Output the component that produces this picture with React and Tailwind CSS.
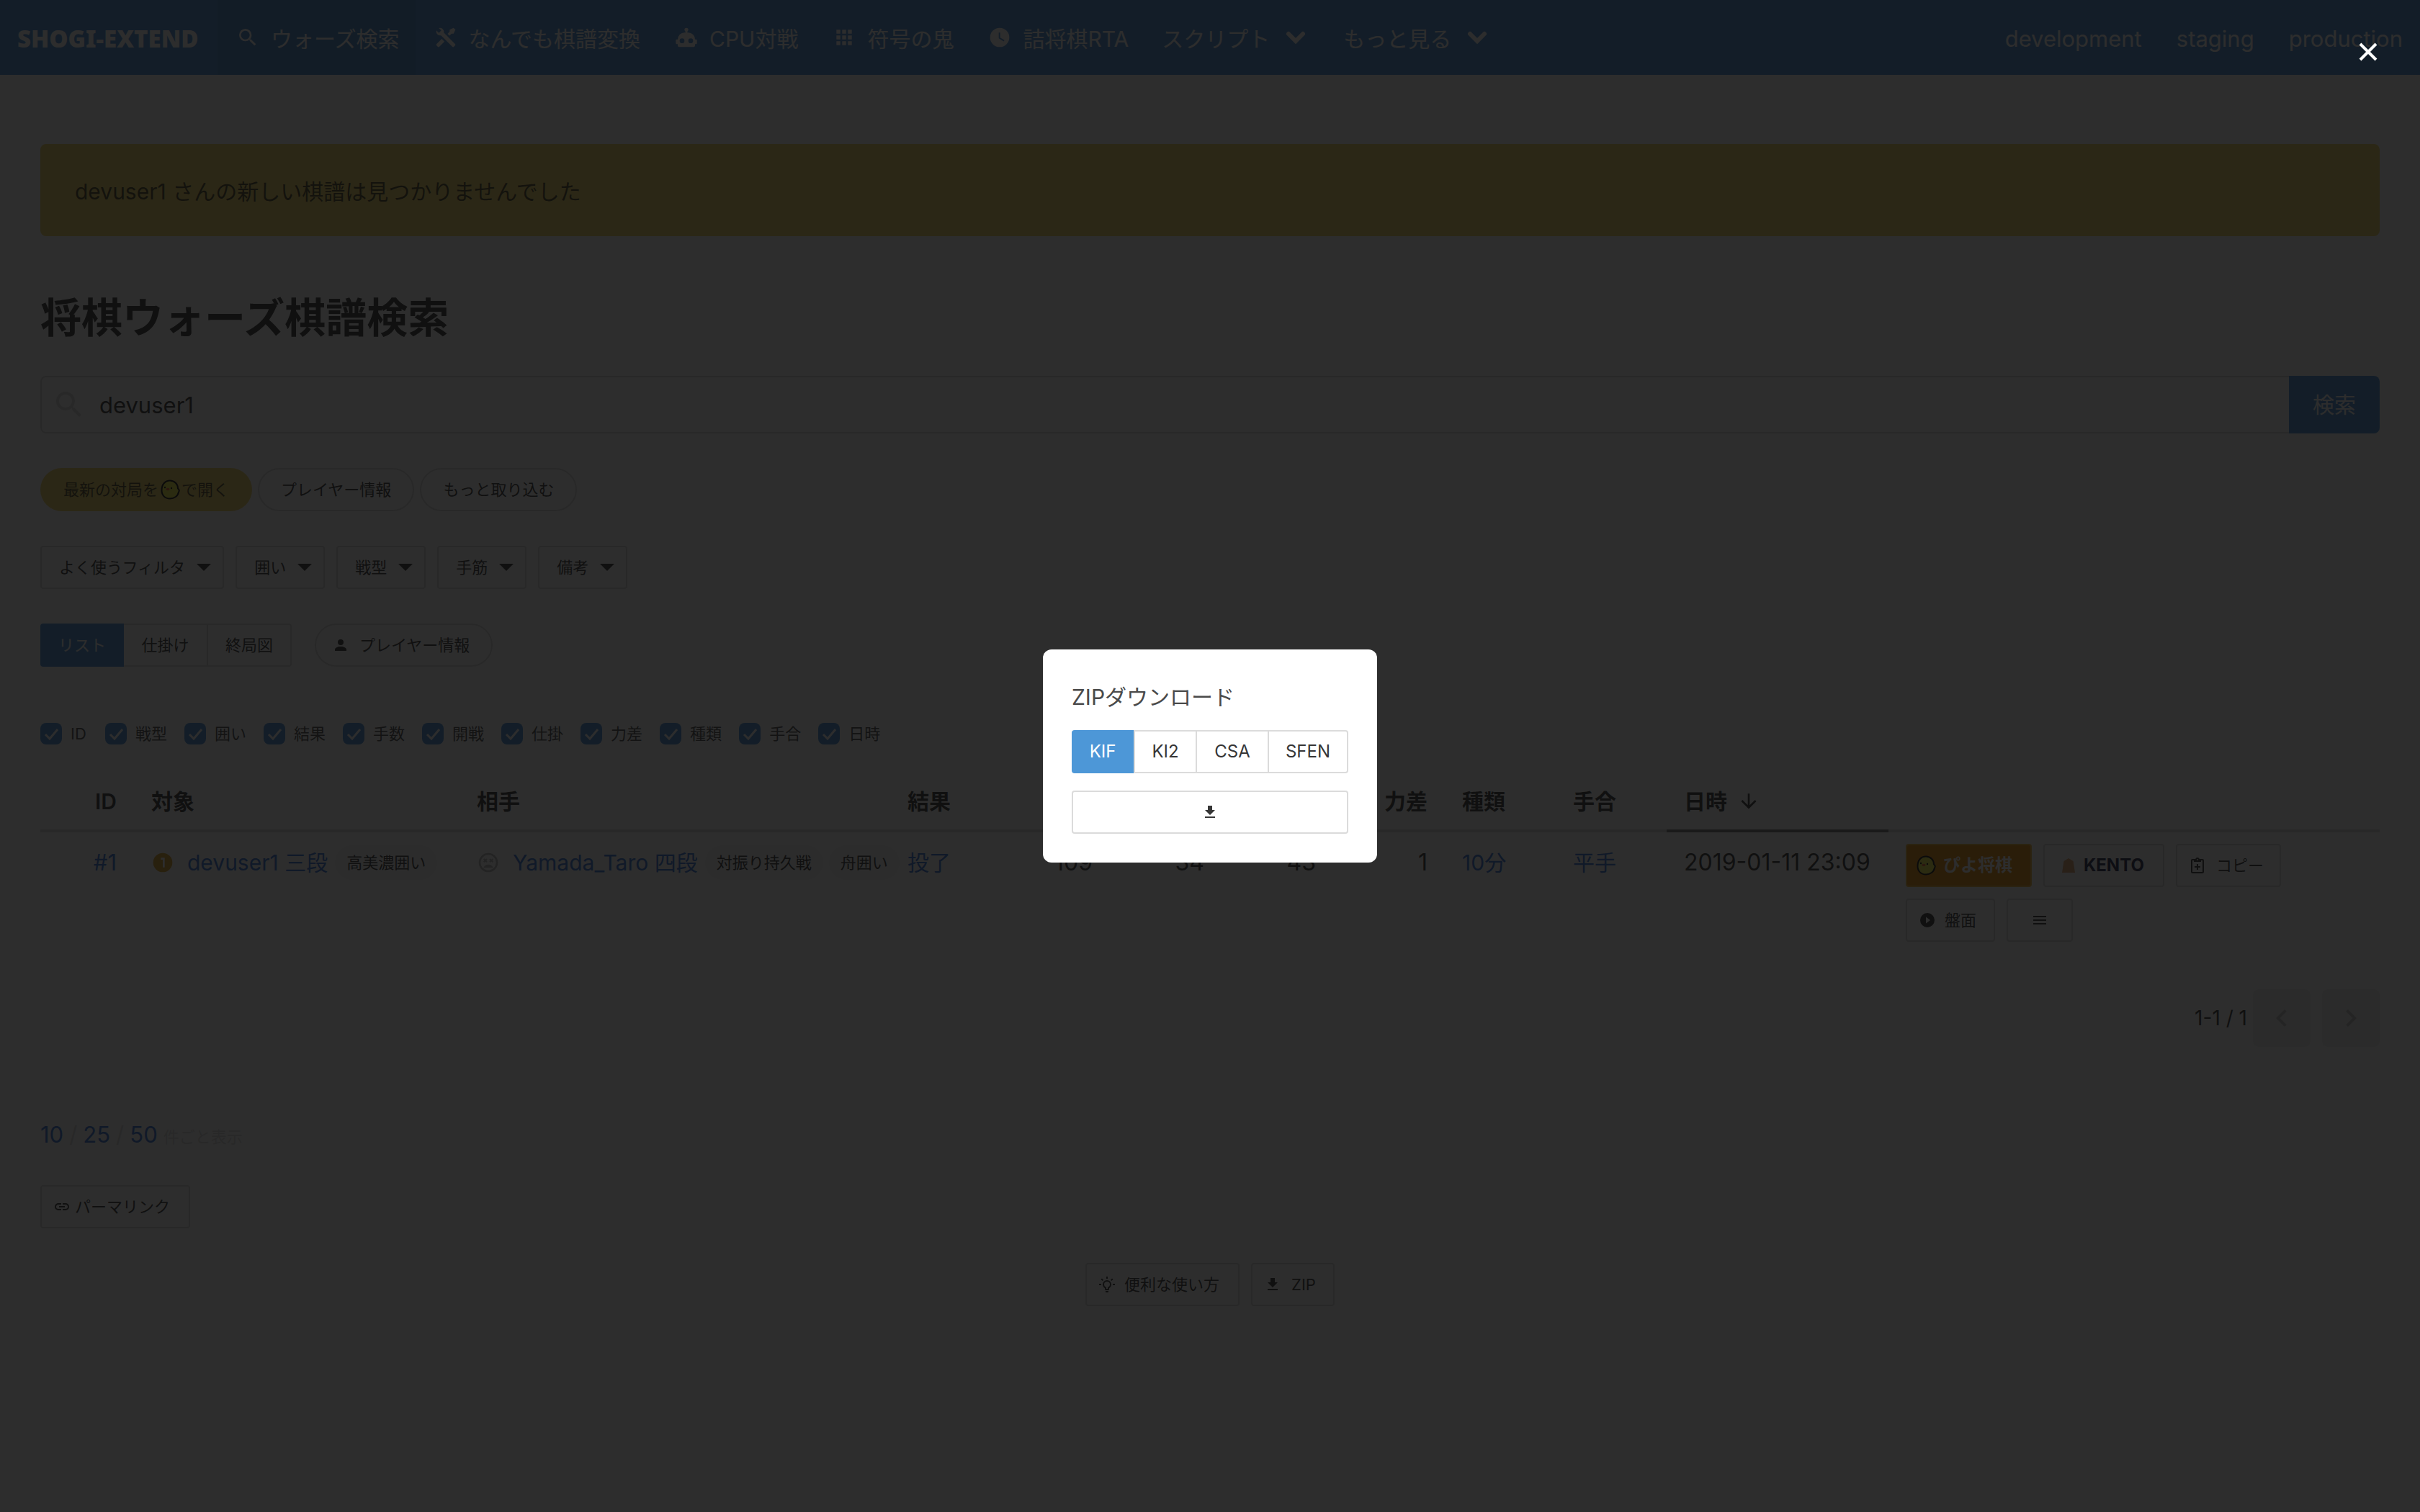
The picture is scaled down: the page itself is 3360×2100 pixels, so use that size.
import React from "react";

const P = {
  search: "M9.5 3A6.5 6.5 0 0 1 16 9.5c0 1.61-.59 3.09-1.56 4.23l.27.27h.79l5 5-1.5 1.5-5-5v-.79l-.27-.27A6.516 6.516 0 0 1 9.5 16 6.5 6.5 0 0 1 3 9.5 6.5 6.5 0 0 1 9.5 3m0 2C7 5 5 7 5 9.5S7 14 9.5 14 14 12 14 9.5 12 5 9.5 5Z",
  tools: "m21.71 20.29-1.42 1.42a1 1 0 0 1-1.41 0L7 9.85A3.81 3.81 0 0 1 6 10a4 4 0 0 1-3.78-5.3l2.54 2.54.53-.53 1.42-1.42.53-.53L4.7 2.22A4 4 0 0 1 10 6a3.81 3.81 0 0 1-.15 1l11.86 11.88a1 1 0 0 1 0 1.41M2.29 18.88a1 1 0 0 0 0 1.41l1.42 1.42a1 1 0 0 0 1.41 0l5.47-5.46-2.83-2.83M20 2l-4 2v2l-2.17 2.17 2 2L18 8h2l2-4Z",
  robot: "M12 2a2 2 0 0 1 2 2c0 .74-.4 1.39-1 1.73V7h1a7 7 0 0 1 7 7h1a1 1 0 0 1 1 1v3a1 1 0 0 1-1 1h-1v1a2 2 0 0 1-2 2H5a2 2 0 0 1-2-2v-1H2a1 1 0 0 1-1-1v-3a1 1 0 0 1 1-1h1a7 7 0 0 1 7-7h1V5.73c-.6-.34-1-.99-1-1.73a2 2 0 0 1 2-2M7.5 13A2.5 2.5 0 0 0 5 15.5 2.5 2.5 0 0 0 7.5 18a2.5 2.5 0 0 0 2.5-2.5A2.5 2.5 0 0 0 7.5 13m9 0a2.5 2.5 0 0 0-2.5 2.5 2.5 2.5 0 0 0 2.5 2.5 2.5 2.5 0 0 0 2.5-2.5 2.5 2.5 0 0 0-2.5-2.5Z",
  grid: "M16 20h4v-4h-4m0-2h4v-4h-4m-6-2h4V4h-4m6 4h4V4h-4m-6 10h4v-4h-4m-6 4h4v-4H4m0 10h4v-4H4m6 4h4v-4h-4M4 8h4V4H4Z",
  clock: "M12 2A10 10 0 0 0 2 12a10 10 0 0 0 10 10 10 10 0 0 0 10-10A10 10 0 0 0 12 2m4.2 14.2L11 13V7h1.5v5.2l4.5 2.7Z",
  account: "M12 4a4 4 0 0 1 4 4 4 4 0 0 1-4 4 4 4 0 0 1-4-4 4 4 0 0 1 4-4m0 10c4.42 0 8 1.79 8 4v2H4v-2c0-2.21 3.58-4 8-4Z",
  one: "M10 7v2h2v8h2V7h-4m2-5a10 10 0 0 1 10 10 10 10 0 0 1-10 10A10 10 0 0 1 2 12 10 10 0 0 1 12 2Z",
  dead: "M12 2C6.47 2 2 6.5 2 12a10 10 0 0 0 10 10 10 10 0 0 0 10-10A10 10 0 0 0 12 2m0 18a8 8 0 0 1-8-8 8 8 0 0 1 8-8 8 8 0 0 1 8 8 8 8 0 0 1-8 8m4.18-12.24-1.06 1.06-1.06-1.06L13 8.82l1.06 1.06L13 10.94 14.06 12l1.06-1.06L16.18 12l1.06-1.06-1.06-1.06 1.06-1.06M7.82 12l1.06-1.06L9.94 12 11 10.94 9.94 9.88 11 8.82 9.94 7.76 8.88 8.82 7.82 7.76 6.76 8.82l1.06 1.06-1.06 1.06M12 14c-2.33 0-4.31 1.46-5.11 3.5h10.22c-.8-2.04-2.78-3.5-5.11-3.5Z",
  download: "M5 20h14v-2H5m14-9h-4V3H9v6H5l7 7 7-7Z",
  clipboard: "M19 3h-4.18C14.4 1.84 13.3 1 12 1S9.6 1.84 9.18 3H5a2 2 0 0 0-2 2v16a2 2 0 0 0 2 2h14a2 2 0 0 0 2-2V5a2 2 0 0 0-2-2m-7 0a1 1 0 0 1 1 1 1 1 0 0 1-1 1 1 1 0 0 1-1-1 1 1 0 0 1 1-1M7 7h10V5h2v16H5V5h2v2m4 3h2v3h3v2h-3v3h-2v-3H8v-2h3v-3Z",
  play: "M10 16.5v-9l6 4.5M12 2A10 10 0 0 0 2 12a10 10 0 0 0 10 10 10 10 0 0 0 10-10A10 10 0 0 0 12 2Z",
  menu: "M3 6h18v2H3V6m0 5h18v2H3v-2m0 5h18v2H3v-2Z",
  left: "M15.41 16.58 10.83 12l4.58-4.59L14 6l-6 6 6 6 1.41-1.42Z",
  right: "M8.59 16.58 13.17 12 8.59 7.41 10 6l6 6-6 6-1.41-1.42Z",
  arrow: "M11 4h2v12l5.5-5.5 1.42 1.42L12 19.84l-7.92-7.92L5.5 10.5 11 16V4Z",
  link: "M3.9 12c0-1.71 1.39-3.1 3.1-3.1h4V7H7a5 5 0 0 0-5 5 5 5 0 0 0 5 5h4v-1.9H7c-1.71 0-3.1-1.39-3.1-3.1M8 13h8v-2H8v2m9-6h-4v1.9h4c1.71 0 3.1 1.39 3.1 3.1 0 1.71-1.39 3.1-3.1 3.1h-4V17h4a5 5 0 0 0 5-5 5 5 0 0 0-5-5Z",
  bulb: "M20 11h3v2h-3v-2M1 11h3v2H1v-2M13 1v3h-2V1h2M4.92 3.5l2.13 2.14-1.42 1.41L3.5 4.93 4.92 3.5m12.03 2.13 2.12-2.13 1.43 1.43-2.13 2.12-1.42-1.42M12 6a6 6 0 0 1 6 6c0 2.22-1.21 4.16-3 5.2V19a1 1 0 0 1-1 1h-4a1 1 0 0 1-1-1v-1.8c-1.79-1.04-3-2.98-3-5.2a6 6 0 0 1 6-6m2 15v1a1 1 0 0 1-1 1h-2a1 1 0 0 1-1-1v-1h4m-3-3h2v-2.13c1.73-.44 3-2.01 3-3.87a4 4 0 0 0-4-4 4 4 0 0 0-4 4c0 1.86 1.27 3.43 3 3.87V18Z",
};

function Icon({ name, className = "size-6" }) {
  return (
    <svg viewBox="0 0 24 24" fill="currentColor" aria-hidden="true" className={`shrink-0 ${className}`}>
      <path d={P[name]} />
    </svg>
  );
}

function Chick({ className = "size-7" }) {
  return (
    <svg viewBox="0 0 28 28" aria-hidden="true" className={`shrink-0 ${className}`}>
      <path d="M14 1.500C20.500 1.500 25 6.500 25 12.500C27 14 27 16 26 17.500C25 23 20 26.500 14 26.500C7 26.500 2.500 22 2.500 15C2.500 7 7 1.500 14 1.500Z" fill="#f0f03c" stroke="#111" strokeWidth="2" />
      <circle cx="7" cy="11" r="1.200" fill="#111" />
      <circle cx="16" cy="12" r="1.200" fill="#111" />
      <ellipse cx="11" cy="13.500" rx="2.600" ry="1.700" fill="#f0642d" />
    </svg>
  );
}

function Chevron() {
  return (
    <svg viewBox="0 0 28 20" fill="none" stroke="currentColor" strokeWidth="6" strokeLinecap="round" aria-hidden="true" className="h-5 w-7 shrink-0">
      <path d="M4 5 14 15 24 5" />
    </svg>
  );
}

const box = "flex h-[60px] items-center border-2 border-[#dbdbdb] whitespace-nowrap";
const small = `${box} text-[22px] text-[#363636]`;

const navItems = [
  ["search", "ウォーズ検索"],
  ["tools", "なんでも棋譜変換"],
  ["robot", "CPU対戦"],
  ["grid", "符号の鬼"],
  ["clock", "詰将棋RTA"],
];

function Navbar() {
  return (
    <nav className="flex h-[104px] items-stretch bg-[#4a91d9] text-white">
      <a href="#top" className="flex w-[302px] items-center pt-1 pl-6 font-['Noto_Sans',sans-serif] text-[33px] font-black whitespace-nowrap">SHOGI-EXTEND</a>
      {navItems.map(([icon, label], i) => (
        <a key={label} href="#nav" className={`flex items-center px-[22px] ${i === 0 ? "bg-[#4589cf]" : ""}`}>
          <span className="mr-3 flex w-10 justify-center"><Icon name={icon} className="size-8" /></span>
          <span className="pt-1">{label}</span>
        </a>
      ))}
      {["スクリプト", "もっと見る"].map((label) => (
        <button key={label} type="button" className="flex items-center gap-[22px] pr-7 pl-6">
          <span className="pt-1">{label}</span>
          <Chevron />
        </button>
      ))}
      <div className="ml-auto flex text-[31px]">
        {["development", "staging", "production"].map((label) => (
          <a key={label} href="#env" className="flex items-center px-6 pt-1">{label}</a>
        ))}
      </div>
    </nav>
  );
}

function Filter({ label }) {
  return (
    <button type="button" className={`${small} gap-4 rounded pr-4 pl-6`}>
      {label}
      <svg viewBox="0 0 20 10" fill="currentColor" aria-hidden="true" className="h-2.5 w-5"><path d="M0 0h20L10 10Z" /></svg>
    </button>
  );
}

function Check({ label }) {
  return (
    <label className="flex items-center gap-3 text-[22px]">
      <span className="relative flex size-[30px]">
        <input type="checkbox" defaultChecked className="size-[30px] appearance-none rounded-lg bg-[#4a91d9]" />
        <svg viewBox="0 0 30 30" fill="none" stroke="white" strokeWidth="3" aria-hidden="true" className="pointer-events-none absolute inset-0"><path d="m7 16 6 6L24 9" /></svg>
      </span>
      <span className="min-w-6">{label}</span>
    </label>
  );
}

function Tag({ children }) {
  return <span className="flex h-12 items-center rounded-full bg-[#f5f5f5] px-4 text-[22px] text-[#363636]">{children}</span>;
}

const thBase = "h-[84px] border-b-4 px-6 pt-1 font-semibold text-[#363636]";
const th = `${thBase} border-[#dbdbdb] text-left`;
const thRight = `${thBase} border-[#dbdbdb] text-right`;
const td = "px-6 pt-4 align-top whitespace-nowrap text-[#363636]";
const line = "flex h-[52px] items-center";

function GameTable() {
  return (
    <table className="mt-9 w-full table-fixed">
      <colgroup>
        <col className="w-[130px]" /><col className="w-[452px]" /><col className="w-[598px]" /><col className="w-[150px]" />
        <col className="w-[155px]" /><col className="w-[155px]" /><col className="w-[155px]" /><col className="w-[155px]" />
        <col className="w-[154px]" /><col className="w-[154px]" /><col className="w-[308px]" /><col />
      </colgroup>
      <thead>
        <tr>
          <th className={thRight}>ID</th>
          <th className={th}>対象</th>
          <th className={th}>相手</th>
          <th className={th}>結果</th>
          <th className={thRight}>手数</th>
          <th className={thRight}>開戦</th>
          <th className={thRight}>仕掛</th>
          <th className={thRight}>力差</th>
          <th className={th}>種類</th>
          <th className={th}>手合</th>
          <th className={`${thBase} border-[#7a7a7a] text-left`}>
            <span className="flex items-center gap-3.5">日時<Icon name="arrow" className="size-8" /></span>
          </th>
          <th className={th} aria-label="操作" />
        </tr>
      </thead>
      <tbody>
        <tr>
          <td className={td}><a href="#1" className={`${line} justify-end text-[31px] text-[#3273dc]`}>#1</a></td>
          <td className={td}>
            <div className={line}>
              <Icon name="one" className="size-8 text-[#dca028]" />
              <a href="#user" className="mr-2.5 ml-[18px] text-[#3273dc]">devuser1 三段</a>
              <Tag>高美濃囲い</Tag>
            </div>
          </td>
          <td className={td}>
            <div className={line}>
              <Icon name="dead" className="size-8 text-[#b5b5b5]" />
              <a href="#rival" className="mr-2.5 ml-[18px] text-[#3273dc]">Yamada_Taro 四段</a>
              <Tag>対振り持久戦</Tag>
              <span className="ml-2"><Tag>舟囲い</Tag></span>
            </div>
          </td>
          <td className={td}><a href="#r" className={`${line} text-[#3273dc]`}>投了</a></td>
          <td className={td}><div className={`${line} justify-end text-[32px]`}>109</div></td>
          <td className={td}><div className={`${line} justify-end text-[32px]`}>34</div></td>
          <td className={td}><div className={`${line} justify-end text-[32px]`}>43</div></td>
          <td className={td}><div className={`${line} justify-end text-[32px]`}>1</div></td>
          <td className={td}><a href="#t" className={`${line} text-[#3273dc]`}>10分</a></td>
          <td className={td}><a href="#h" className={`${line} text-[#3273dc]`}>平手</a></td>
          <td className={td}><div className={`${line} text-[32px]`}>2019-01-11 23:09</div></td>
          <td className={td}>
            <div className="flex max-w-[560px] flex-wrap gap-4">
              <button type="button" className="flex h-[60px] w-[175px] items-center gap-2.5 rounded border-2 border-[#f0b43c] bg-[#eb8c05] pl-3 text-[24px] font-bold text-white"><Chick />ぴよ将棋</button>
              <button type="button" className={`${box} w-[168px] gap-3 rounded pl-6 text-[24px] font-bold text-[#1e2346]`}>
                <svg viewBox="0 0 18 20" aria-hidden="true" className="h-5 w-[18px]"><path d="M9 0 15.500 4 18 20H0L2.500 4Z" fill="#e0a068" /></svg>
                KENTO
              </button>
              <button type="button" className={`${small} w-[146px] gap-3.5 rounded pl-4`}><Icon name="clipboard" />コピー</button>
              <button type="button" className={`${small} w-[124px] gap-3 rounded pl-4`}><Icon name="play" />盤面</button>
              <button type="button" aria-label="メニュー" className={`${small} w-[92px] justify-center rounded`}><Icon name="menu" /></button>
            </div>
          </td>
        </tr>
      </tbody>
    </table>
  );
}

function Modal() {
  return (
    <div className="fixed inset-0 flex items-center justify-center bg-[#0a0a0a]/86">
      <div role="dialog" aria-label="ZIPダウンロード" className="w-[464px] rounded-xl bg-white p-10">
        <p className="h-12 leading-[52px] text-[#4a4a4a]">ZIPダウンロード</p>
        <div className="mt-6 flex h-[60px] text-[24px] text-[#363636]">
          <button type="button" className="w-[86px] rounded-l bg-[#4d97d7] text-white">KIF</button>
          <button type="button" className="w-[88px] border-2 border-[#dbdbdb]">KI2</button>
          <button type="button" className="w-[100px] border-y-2 border-r-2 border-[#dbdbdb]">CSA</button>
          <button type="button" className="flex-1 rounded-r border-y-2 border-r-2 border-[#dbdbdb]">SFEN</button>
        </div>
        <button type="button" aria-label="ダウンロード" className={`${small} mt-6 w-full justify-center rounded`}><Icon name="download" /></button>
      </div>
      <button type="button" aria-label="閉じる" className="absolute top-10 right-10 flex size-16 items-center justify-center text-white">
        <svg viewBox="0 0 32 32" stroke="currentColor" strokeWidth="4" aria-hidden="true" className="size-8"><path d="M5 5 27 27M27 5 5 27" /></svg>
      </button>
    </div>
  );
}

export default function App() {
  return (
    <div className="min-h-screen bg-white font-['Inter','Noto_Sans_CJK_JP',sans-serif] text-[30px] leading-[44px] text-[#4a4a4a]">
      <Navbar />
      <main className="px-14 pt-24">
        <div className="flex h-32 items-center rounded-lg bg-[#eed25f] px-12 pt-1 text-black/70">devuser1 さんの新しい棋譜は見つかりませんでした</div>
        <h1 className="mt-[82px] h-16 text-[57px] leading-[64px] font-bold text-[#363636]">将棋ウォーズ棋譜検索</h1>
        <form className="mt-12 flex h-20" onSubmit={(e) => e.preventDefault()}>
          <div className="flex flex-1 items-center rounded-l-lg border-2 border-r-0 border-[#dbdbdb] pl-3.5">
            <Icon name="search" className="size-12 text-[#dbdbdb]" />
            <input aria-label="検索" defaultValue="devuser1" className="ml-[18px] h-full flex-1 text-[31px] text-[#363636] outline-none" />
          </div>
          <button type="submit" className="w-[126px] rounded-r-lg bg-[#4a91d9] text-white">検索</button>
        </form>
        <div className="mt-12 flex gap-2">
          <button type="button" className="flex h-[60px] items-center rounded-full bg-[#eed25f] px-8 text-[22px] text-black/70">最新の対局を<Chick className="mx-0.5 size-7" />で開く</button>
          <button type="button" className={`${small} rounded-full px-[30px]`}>プレイヤー情報</button>
          <button type="button" className={`${small} rounded-full px-[30px]`}>もっと取り込む</button>
        </div>
        <div className="mt-12 flex gap-4">
          {["よく使うフィルタ", "囲い", "戦型", "手筋", "備考"].map((l) => <Filter key={l} label={l} />)}
        </div>
        <div className="mt-12 flex">
          <button type="button" className="h-[60px] w-[116px] rounded-l bg-[#4a91d9] text-[22px] text-white">リスト</button>
          <button type="button" className={`${small} w-[117px] justify-center border-l-0`}>仕掛け</button>
          <button type="button" className={`${small} w-[116px] justify-center rounded-r border-l-0`}>終局図</button>
          <button type="button" className={`${small} ml-8 gap-3.5 rounded-full pr-[30px] pl-[22px]`}><Icon name="account" />プレイヤー情報</button>
        </div>
        <div className="mt-[78px] flex h-[30px] gap-6">
          {["ID", "戦型", "囲い", "結果", "手数", "開戦", "仕掛", "力差", "種類", "手合", "日時"].map((l) => <Check key={l} label={l} />)}
        </div>
        <GameTable />
        <div className="mt-[66px] flex items-center justify-end">
          <span className="mr-2 text-[28px] text-[#363636]">1-1 / 1</span>
          <button type="button" aria-label="前へ" disabled className="flex size-20 items-center justify-center rounded-lg bg-[#f0f0f0] text-[#c0c0c0]"><Icon name="left" className="size-12" /></button>
          <button type="button" aria-label="次へ" disabled className="ml-4 flex size-20 items-center justify-center rounded-lg bg-[#f0f0f0] text-[#c0c0c0]"><Icon name="right" className="size-12" /></button>
        </div>
        <div className="mt-[100px] flex h-11 items-baseline gap-2 text-[31px] text-[#dbdbdb]">
          <a href="#10" className="text-[#3273dc]">10</a>/<a href="#25" className="text-[#3273dc]">25</a>/<a href="#50" className="text-[#3273dc]">50</a>
          <span className="text-[22px]">件ごと表示</span>
        </div>
        <button type="button" className={`${small} mt-12 gap-1.5 rounded pr-[26px] pl-4`}><Icon name="link" />パーマリンク</button>
        <div className="mt-12 flex justify-center gap-4">
          <button type="button" className={`${small} gap-3 rounded pr-[26px] pl-4`}><Icon name="bulb" />便利な使い方</button>
          <button type="button" className={`${small} gap-3.5 rounded pr-6 pl-4`}><Icon name="download" />ZIP</button>
        </div>
      </main>
      <Modal />
    </div>
  );
}
